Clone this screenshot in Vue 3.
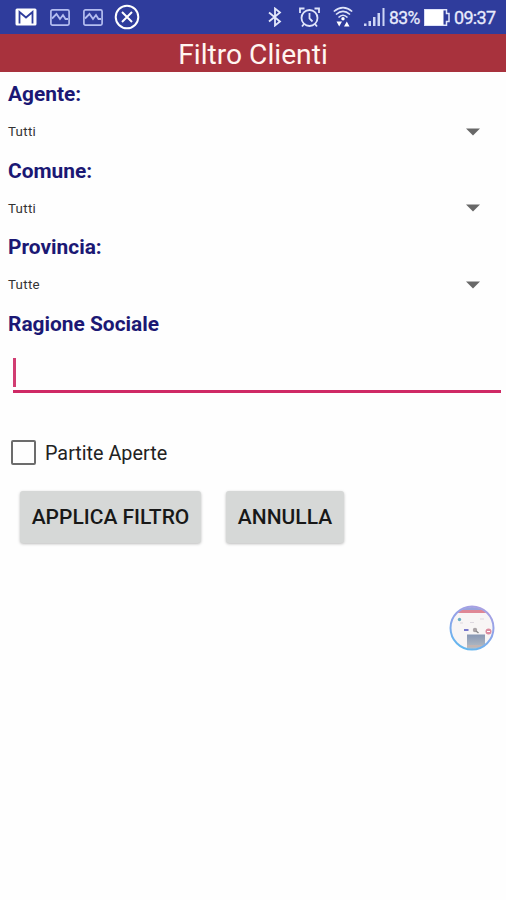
<script setup>
import { ref } from 'vue'

const fields = [
  { label: 'Agente:', value: 'Tutti' },
  { label: 'Comune:', value: 'Tutti' },
  { label: 'Provincia:', value: 'Tutte' }
]
const openItems = ref(false)
</script>

<template>
  <div class="screen">
    <header class="status">
      <div class="notifications">
        <svg class="mail" width="22" height="18" viewBox="0 0 22 18">
          <rect x="0.5" y="0.5" width="21" height="17" rx="1.5" fill="#fff" />
          <path d="M4.500 15.500V4L11 9.500 17.500 4v11.500" fill="none" stroke="#2f3c9c" stroke-width="1.800" />
        </svg>
        <svg v-for="n in 2" :key="n" class="photo" width="20" height="17" viewBox="0 0 20 17">
          <rect x="0.9" y="0.9" width="18.200" height="15.200" rx="1.500" fill="none" stroke="#b4bdf0" stroke-width="1.700" />
          <path d="M2 9.500L6.500 5l3.500 5L13 6l2.500 4H18" fill="none" stroke="#b4bdf0" stroke-width="1.800" />
        </svg>
        <svg class="close" width="26" height="26" viewBox="0 0 26 26" fill="none" stroke="#fff">
          <circle cx="13" cy="13" r="11.300" stroke-width="2" />
          <path d="M8 8l10 10M18 8L8 18" stroke-width="2" />
        </svg>
      </div>
      <div class="system">
        <svg class="bluetooth" width="14" height="20" viewBox="0 0 14 20" fill="none" stroke="#e4e8fb" stroke-width="1.800">
          <path d="M1 5.500L12 14.500 7 18.500V1.500l5 4L1 14.500" />
        </svg>
        <svg class="alarm" width="21" height="21" viewBox="0 0 21 21" fill="none" stroke="#dfe4fa" stroke-width="1.800">
          <circle cx="10.500" cy="11" r="8" />
          <path d="M10.500 6v5.500l3 3M1 6V1.500h4.500M20 6V1.500h-4.500M5 17l-2 2.500M16 17l2 2.500" />
        </svg>
        <svg class="wifi" width="20" height="22" viewBox="0 0 20 22" fill="none" stroke="#dfe4fa" stroke-width="1.600">
          <path d="M.8 5.500Q10-2.300 19.200 5.500M3 8.500Q10 2.300 17 8.500M5.500 11.500Q10 7 14.500 11.500" />
          <circle cx="10" cy="12.800" r="1.700" fill="#fff" stroke="none" />
          <path d="M3.500 15.500h5.500L6.200 20.500zM11 20.500h5.500L13.800 15.500z" fill="#fff" stroke="none" />
        </svg>
        <svg class="signal" width="21" height="18" viewBox="0 0 21 18" fill="#cdd5f5">
          <path d="M0 15.500h2.500V18H0zM4.500 13H7v5H4.500zM9 9h2.500v9H9zM13.500 5H16v13h-2.500zM18.500 0h2v18h-2z" />
        </svg>
        <span class="percent">83%</span>
        <svg class="battery" width="26" height="17" viewBox="0 0 26 17">
          <path d="M.8.800h21.700v3.700H25v8h-2.500v3.700H.800z" fill="none" stroke="#dfe4fa" stroke-width="1.500" />
          <path d="M1 1h18.500v15H1z" fill="#fff" />
        </svg>
        <span class="clock">09:37</span>
      </div>
    </header>
    <h1 class="title"><span>Filtro Clienti</span></h1>
    <main>
      <section v-for="f in fields" :key="f.label" class="field">
        <div class="label">{{ f.label }}</div>
        <div class="select">
          <span>{{ f.value }}</span>
          <svg width="14" height="8" viewBox="0 0 14 8"><path d="M0 .5h14L7 7.500z" fill="#686868" /></svg>
        </div>
      </section>
      <section>
        <div class="label">Ragione Sociale</div>
        <div class="input"><i class="caret"></i></div>
      </section>
      <div class="check" @click="openItems = !openItems">
        <i class="box" :class="{ checked: openItems }"></i>
        <span>Partite Aperte</span>
      </div>
      <div class="actions">
        <button class="apply">APPLICA FILTRO</button>
        <button class="cancel">ANNULLA</button>
      </div>
    </main>
    <svg class="bubble" width="48" height="48" viewBox="0 0 48 48">
      <defs>
        <linearGradient id="ring" x1="0.7" y1="0" x2="0.3" y2="1">
          <stop offset="0" stop-color="#aaa0e2" />
          <stop offset="0.5" stop-color="#8aa4ea" />
          <stop offset="1" stop-color="#62b8ef" />
        </linearGradient>
        <linearGradient id="thumb" x1="0" y1="0" x2="0" y2="1">
          <stop offset="0" stop-color="#8797b4" />
          <stop offset="1" stop-color="#b8bfc5" />
        </linearGradient>
        <clipPath id="disc"><circle cx="24" cy="24" r="21" /></clipPath>
      </defs>
      <circle cx="24" cy="24" r="21" fill="#f8f5f5" />
      <g clip-path="url(#disc)">
        <path d="M0 0h48v6H0z" fill="#99a3dc" />
        <path d="M0 6h48v3H0z" fill="#df8795" />
        <path d="M19 30.500h18V45H19z" fill="url(#thumb)" />
        <path d="M19 41h18v2H19z" fill="#c2b4b2" />
        <circle cx="11.500" cy="15.500" r="1.700" fill="#6aaec2" />
        <path d="M16 26h4.500" stroke="#7777cc" stroke-width="1.800" />
        <path d="M12 19h3M22 18.500h4M32 15h4" stroke="#ddd7df" />
        <circle cx="27" cy="26" r="2.200" fill="#aaa3a6" />
        <path d="M28 27l2.500 2" stroke="#888" stroke-width="1.500" />
        <circle cx="40.500" cy="27.500" r="3" fill="#dc8ca0" />
        <path d="M39 27.500h3" stroke="#fff" />
      </g>
      <circle cx="24" cy="24" r="21.500" fill="none" stroke="url(#ring)" stroke-width="2" />
    </svg>
  </div>
</template>

<style>
body { background: #fefefe; }
</style>

<style scoped>
.screen {
  position: relative;
  width: 506px;
  height: 900px;
  overflow: hidden;
  background: #fefefe;
  font-family: Roboto, sans-serif;
  color: #222;
}
.status {
  display: flex;
  justify-content: space-between;
  height: 34px;
  padding: 0 10px 0 15px;
  background: #2f3c9c;
  color: #e8ebfc;
}
.notifications, .system { display: flex; align-items: center; }
.mail { margin-right: 12.5px; }
.photo { margin-right: 13.5px; }
.close { margin-left: -2.5px; }
.bluetooth { margin-right: 17px; }
.alarm { margin-right: 13px; }
.wifi { margin-right: 11px; }
.signal { margin-right: 4px; }
.percent { width: 31px; padding-top: 2px; font-size: 17.5px; letter-spacing: -0.6px; margin-right: 4px; -webkit-text-stroke: 0.3px; }
.battery { margin-right: 4px; }
.clock { width: 42px; padding-top: 1px; font-size: 18px; letter-spacing: -0.7px; white-space: nowrap; -webkit-text-stroke: 0.3px; }
.title {
  display: flex;
  align-items: center;
  justify-content: center;
  height: 38px;
  box-sizing: border-box;
  padding-top: 2px;
  margin: 0;
  background: #a8323d;
  color: #fff5f0;
  font-size: 28.2px;
  font-weight: 400;
}
.label {
  height: 45px;
  padding-left: 8px;
  line-height: 45px;
  font-size: 20.9px;
  font-weight: 700;
  color: #1b1874;
}
.select {
  display: flex;
  align-items: center;
  justify-content: space-between;
  height: 31.5px;
  box-sizing: border-box;
  padding: 0 26px 2px 8px;
  font-size: 13.3px;
  letter-spacing: 0.3px;
  color: #333;
}
.input {
  height: 46px;
  box-sizing: border-box;
  margin: 0 5px 0 13px;
  padding-top: 11px;
  border-bottom: 3px solid #cf2965;
}
.caret { display: block; width: 3px; height: 29px; background: #d13d72; }
.check {
  display: flex;
  align-items: center;
  gap: 9.5px;
  height: 26px;
  margin: 47px 0 0 10.5px;
  font-size: 19.8px;
}
.check span { padding-top: 2px; }
.box { width: 25px; height: 25px; box-sizing: border-box; border: 2.5px solid #6c6c6c; border-radius: 2px; }
.box.checked { background: #cf2965; }
.actions { display: flex; gap: 25px; padding: 25px 0 0 20px; }
button {
  height: 52px;
  padding: 1px 0 0;
  border: 0;
  border-radius: 3px;
  background: #d6d8d7;
  box-shadow: 0 1px 3px #0004;
  color: #181818;
  font: 500 21px Roboto, sans-serif;
}
.apply { width: 181px; }
.cancel { width: 118px; }
.bubble { position: absolute; left: 448px; top: 604px; }
</style>
